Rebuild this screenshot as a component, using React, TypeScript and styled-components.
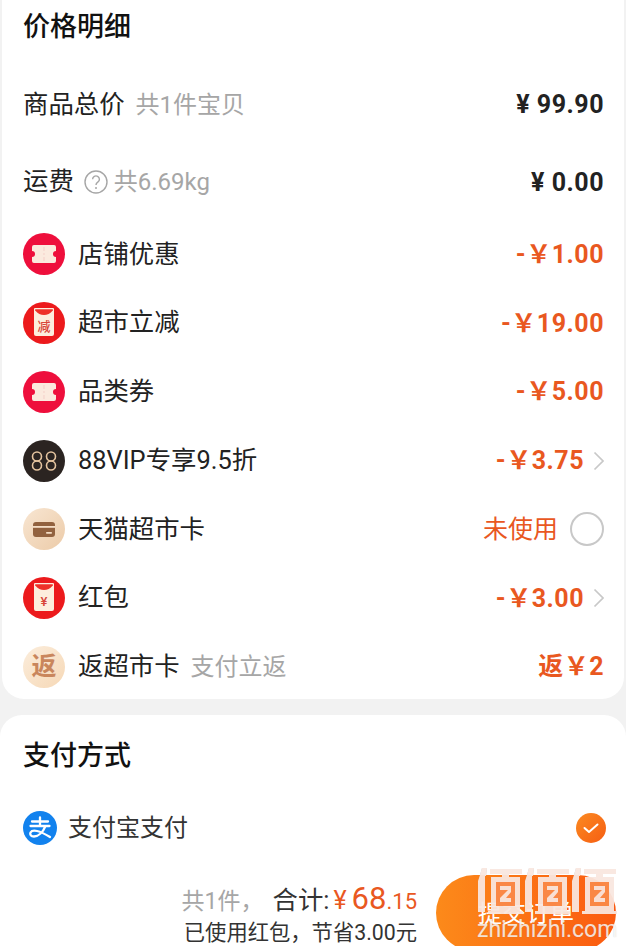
import React from "react";
import styled, { createGlobalStyle } from "styled-components";

const Global = createGlobalStyle`
  html, body { margin: 0; padding: 0; background: #f2f2f2; }
  body { width: 626px; height: 946px; overflow: hidden; font-family: Roboto, "Noto Sans CJK SC", sans-serif; }
`;
const Page = styled.div`
  position: relative; width: 626px; height: 946px; display: flex; flex-direction: column; overflow: hidden;
`;
const PriceCard = styled.section`
  height: 699px; flex: none; margin: 0 2px; background: #fff; border-radius: 0 0 22px 22px; box-sizing: border-box;
  padding: 0 20px 0 21px; display: flex; flex-direction: column;
`;
const PayCard = styled.section`
  height: 147px; flex: none; margin: 16px 0 0 0; background: #fff; border-radius: 22px 22px 0 0; box-sizing: border-box;
  padding: 0 20px 0 23px; display: flex; flex-direction: column;
`;
const CardTitle = styled.h2<{ $h: number }>`
  margin: 0; height: ${p => p.$h}px; flex: none; display: flex; align-items: center;
  font-size: 27px; font-weight: 500; color: #111; line-height: 1;
`;
const PlainRow = styled.div<{ $h: number; $after?: number }>`
  height: ${p => p.$h}px; flex: none; display: flex; align-items: center; justify-content: space-between;
  margin-bottom: ${p => p.$after ?? 0}px;
`;
const IconRow = styled.div`
  height: 68.75px; flex: none; display: flex; align-items: center; justify-content: space-between;
`;
const Left = styled.div`
  display: flex; align-items: center; min-width: 0;
`;
const Right = styled.div`
  display: flex; align-items: center;
`;
const Label = styled.span<{ $ml?: number }>`
  font-size: 25.4px; color: #222; margin-left: ${p => p.$ml ?? 0}px; line-height: 1; white-space: nowrap;
`;
const Sub = styled.span<{ $ml: number }>`
  font-size: 24px; color: #a6a6a6; margin-left: ${p => p.$ml}px; line-height: 1; white-space: nowrap;
`;
const Amount = styled.span<{ $accent?: boolean }>`
  font-size: 25px; font-weight: 700; letter-spacing: 0.5px; color: ${p => (p.$accent ? "#e9581f" : "#222")}; white-space: nowrap; line-height: 1;
`;
const Unused = styled.span`
  font-size: 25px; color: #e9581f; line-height: 1; margin-right: 12px;
`;
const Radio = styled.span`
  width: 34px; height: 34px; box-sizing: border-box; border: 2px solid #c8c8c8; border-radius: 50%; display: block;
`;
const Chevron = styled.svg`
  width: 12px; height: 20px; margin-left: 8px; display: block;
`;
const Badge = styled.span<{ $bg: string }>`
  width: 42px; height: 42px; border-radius: 50%; background: ${p => p.$bg}; flex: none;
  display: flex; align-items: center; justify-content: center; overflow: hidden;
`;
const BadgeText = styled.span`
  font-size: 25px; font-weight: 700; color: #c9865c; line-height: 1;
`;
const PayRow = styled.div`
  height: 60px; flex: none; display: flex; align-items: center; justify-content: space-between;
`;
const PayLabel = styled.span`
  font-size: 24px; color: #333; margin-left: 11px; line-height: 1;
`;
const Footer = styled.footer`
  flex: 1; min-height: 0; overflow: hidden; background: #fff; display: flex; justify-content: flex-end; padding: 13px 10px 0 0;
`;
const Summary = styled.div`
  display: flex; flex-direction: column; align-items: flex-end; margin: 5px 19px 0 0;
`;
const TotalLine = styled.div`
  display: flex; align-items: baseline; height: 39px; white-space: nowrap;
`;
const Count = styled.span`
  font-size: 23px; color: #a6a6a6; margin-right: 9px;
`;
const TotalLabel = styled.span`
  font-size: 25.4px; color: #333;
`;
const Yen = styled.span`
  font-size: 25px; color: #e9581f; margin: 0 5px 0 4px;
`;
const Big = styled.span`
  font-size: 31px; color: #e9581f;
`;
const Cents = styled.span`
  font-size: 22px; color: #e9581f;
`;
const Saved = styled.div`
  font-size: 21.3px; color: #333; line-height: 26px; white-space: nowrap; margin-top: 3px;
`;
const Submit = styled.button`
  width: 180px; height: 76px; border: 0; padding: 0 0 3px; border-radius: 38px; flex: none;
  background: linear-gradient(90deg, #fc8a1a, #fb5a10); color: #fff; font: 400 24px Roboto, "Noto Sans CJK SC", sans-serif;
`;
const Watermark = styled.div`
  position: absolute; left: 477px; top: 867px; width: 149px; height: 79px; pointer-events: none;
`;
const WatermarkUrl = styled.span`
  position: absolute; left: 0; top: 49px; font-size: 23px; line-height: 28px;
  color: rgba(255,255,255,.8); text-shadow: 0 0 1px rgba(120,120,120,.35); white-space: nowrap;
`;
const LogoSvg = styled.svg`
  display: block; filter: drop-shadow(0 0 0.6px rgba(120,120,120,.45));
`;

const Ticket = () => (
  <svg width="24" height="18" viewBox="0 0 24 18">
    <path d="M2 0h20a2 2 0 0 1 2 2v4a3 3 0 0 0 0 6v4a2 2 0 0 1-2 2H2a2 2 0 0 1-2-2v-4a3 3 0 0 0 0-6V2a2 2 0 0 1 2-2z" fill="#fbeade" />
    <path d="M12 2v4M12 8v2M12 12v4" stroke="#f6d3cb" strokeWidth="1.2" />
  </svg>
);
const Envelope = ({ text }: { text: string }) => (
  <svg width="24" height="30" viewBox="0 0 24 30">
    <path d="M3 0h18a1 1 0 0 1 1 1v25a2 2 0 0 1-2 2H4a2 2 0 0 1-2-2V1a1 1 0 0 1 1-1z" fill="#fdeedd" />
    <path d="M3.200 1.200h17.600v1.300c-2.500 3-5.500 4.500-8.800 4.500S5.700 5.500 3.200 2.500z" fill="#ee3128" />
    <text x="12" y="22.500" textAnchor="middle" fontSize="13" fontWeight="500" fill="#d8453a" fontFamily="Roboto, 'Noto Sans CJK SC', sans-serif">{text}</text>
  </svg>
);
const Card = () => (
  <svg width="22" height="15" viewBox="0 0 22 15">
    <rect width="22" height="15" rx="3" fill="#92623f" />
    <rect y="4" width="22" height="1.8" fill="#f5dec6" />
    <rect x="13" y="10" width="6" height="1.8" rx=".8" fill="#f5dec6" />
  </svg>
);
const VipMark = () => (
  <svg width="30" height="20" viewBox="0 0 30 20" fill="none" stroke="#e5c49f" strokeWidth="1.6">
    <circle cx="8" cy="5.5" r="4.5" /><circle cx="8" cy="14.500" r="4.5" />
    <circle cx="22" cy="5.5" r="4.5" /><circle cx="22" cy="14.500" r="4.5" />
  </svg>
);
const Alipay = () => (
  <svg width="34" height="34" viewBox="0 0 34 34" style={{ flex: "none", display: "block" }}>
    <circle cx="17" cy="17" r="17" fill="#1282ee" />
    <path d="M9 10.500h16M17 6.500v8M7.500 15h19M22.500 15c-2.500 6-7 10.500-11.500 10.500-3 0-4.500-2-3.500-4 2-3.500 9-2 19.500 4.500" fill="none" stroke="#fff" strokeWidth="2.3" strokeLinecap="round" />
  </svg>
);
const Check = () => (
  <svg width="30" height="30" viewBox="0 0 30 30" style={{ display: "block" }}>
    <defs><linearGradient id="ck" x1="0" y1="0" x2="1" y2="1"><stop offset="0" stopColor="#fb8a22" /><stop offset="1" stopColor="#f65e12" /></linearGradient></defs>
    <circle cx="15" cy="15" r="15" fill="url(#ck)" />
    <path d="M8.500 15l4.500 4 8.500-7.500" fill="none" stroke="#fff" strokeWidth="2" strokeLinecap="round" strokeLinejoin="round" />
  </svg>
);
const Help = () => (
  <svg width="24" height="24" viewBox="0 0 24 24" style={{ marginLeft: 10, display: "block", flex: "none" }}>
    <circle cx="12" cy="12" r="11" fill="none" stroke="#a6a6a6" strokeWidth="1.4" />
    <path d="M8.600 9.300a3.400 3.400 0 1 1 5.200 2.900c-1.200.8-1.800 1.400-1.800 2.800" fill="none" stroke="#a6a6a6" strokeWidth="1.4" />
    <circle cx="12" cy="18" r="1" fill="#a6a6a6" />
  </svg>
);
const Arrow = () => (
  <Chevron viewBox="0 0 12 20"><path d="M2.500 1.500L11 10L2.500 18.500" fill="none" stroke="#c8c8c8" strokeWidth="1.7" /></Chevron>
);
const LogoMark = () => (
  <LogoSvg width="142" height="48" viewBox="0 0 142 48">
    {[0, 47, 94].map(x => (
      <g key={x} transform={`translate(${x} 0)`} fill="rgba(255,236,228,.9)">
        <path d="M5 1h5L9 9h-1v36H1V14L3 8z" />
        <path d="M13 2h32v5H32v3h11v34h3v3H11v-3h3V10h11V7H13z" fillRule="evenodd" />
        <path d="M19 15h19v24H19zM23 19v4h8l-8 8v4h11v-4h-5l5-6v-6z" fill="#fb6a16" fillOpacity=".75" fillRule="evenodd" />
      </g>
    ))}
  </LogoSvg>
);

type Row = { icon: React.ReactNode; bg: string; label: string; sub?: string; amount?: string; arrow?: boolean };
const rows: Row[] = [
  { icon: <Ticket />, bg: "#ee0f3c", label: "店铺优惠", amount: "-￥1.00" },
  { icon: <Envelope text="减" />, bg: "#ec1a1c", label: "超市立减", amount: "-￥19.00" },
  { icon: <Ticket />, bg: "#ee0f3c", label: "品类券", amount: "-￥5.00" },
  { icon: <VipMark />, bg: "#2b2421", label: "88VIP专享9.5折", amount: "-￥3.75", arrow: true },
  { icon: <Card />, bg: "linear-gradient(135deg,#f8e6d2,#eccba8)", label: "天猫超市卡" },
  { icon: <Envelope text="¥" />, bg: "#ec1a1c", label: "红包", amount: "-￥3.00", arrow: true },
  { icon: <BadgeText>返</BadgeText>, bg: "linear-gradient(135deg,#fbeddc,#f6d8b6)", label: "返超市卡", sub: "支付立返", amount: "返￥2" },
];

export default function App() {
  return (
    <Page>
      <Global />
      <PriceCard>
        <CardTitle $h={54}>价格明细</CardTitle>
        <PlainRow $h={101}>
          <Left><Label>商品总价</Label><Sub $ml={11}>共1件宝贝</Sub></Left>
          <Amount>¥ 99.90</Amount>
        </PlainRow>
        <PlainRow $h={54} $after={11}>
          <Left><Label>运费</Label><Help /><Sub $ml={6}>共6.69kg</Sub></Left>
          <Amount>¥ 0.00</Amount>
        </PlainRow>
        {rows.map(r => (
          <IconRow key={r.label}>
            <Left>
              <Badge $bg={r.bg}>{r.icon}</Badge>
              <Label $ml={13}>{r.label}</Label>
              {r.sub && <Sub $ml={11}>{r.sub}</Sub>}
            </Left>
            <Right>
              {r.amount ? <Amount $accent>{r.amount}</Amount> : <Unused>未使用</Unused>}
              {r.arrow && <Arrow />}
              {!r.amount && <Radio />}
            </Right>
          </IconRow>
        ))}
      </PriceCard>
      <PayCard>
        <CardTitle $h={83}>支付方式</CardTitle>
        <PayRow>
          <Left><Alipay /><PayLabel>支付宝支付</PayLabel></Left>
          <Check />
        </PayRow>
      </PayCard>
      <Footer>
        <Summary>
          <TotalLine>
            <Count>共1件，</Count>
            <TotalLabel>合计:</TotalLabel>
            <Yen>¥</Yen><Big>68</Big><Cents>.15</Cents>
          </TotalLine>
          <Saved>已使用红包，节省3.00元</Saved>
        </Summary>
        <Submit>提交订单</Submit>
      </Footer>
      <Watermark>
        <LogoMark />
        <WatermarkUrl>zhizhizhi.com</WatermarkUrl>
      </Watermark>
    </Page>
  );
}
